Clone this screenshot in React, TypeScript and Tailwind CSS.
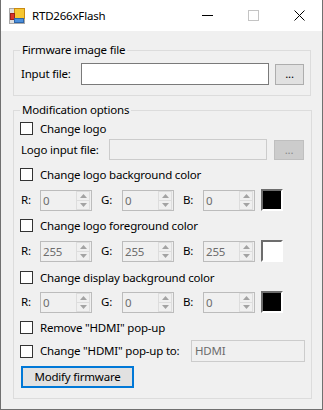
import React from "react";

const font = "font-['Noto_Sans',sans-serif]";

function Check({ label, className = "" }: { label: string; className?: string }) {
  return (
    <div className={`flex h-[13px] items-center ${className}`}>
      <span className="h-[13px] w-[13px] shrink-0 border border-[#333333] bg-white" />
      <span className="ml-[7px] leading-none">{label}</span>
    </div>
  );
}

function Arrow({ up }: { up?: boolean }) {
  return (
    <svg width="7" height="4" viewBox="0 0 7 4">
      <path d={up ? "M0 4 L3.5 0 L7 4 Z" : "M0 0 L3.5 4 L7 0 Z"} fill="#a3a3a3" />
    </svg>
  );
}

function Spin({ value }: { value: string }) {
  return (
    <div className="flex h-[21px] w-[52px] shrink-0 items-stretch border border-[#bcbcbc] bg-[#f0f0f0]">
      <span className="flex-1 pl-[2px] leading-[19px] text-[#6d6d6d]">{value}</span>
      <div className="mr-[1px] flex w-[14px] flex-col">
        <div className="flex flex-1 items-center justify-center border border-[#dddddd]">
          <Arrow up />
        </div>
        <div className="flex flex-1 items-center justify-center border border-t-0 border-[#dddddd]">
          <Arrow />
        </div>
      </div>
    </div>
  );
}

function RgbRow({ value, color, className = "" }: { value: string; color: string; className?: string }) {
  return (
    <div className={`flex h-[22px] items-center ${className}`}>
      <span className="w-[20px] pl-[1px]">R:</span>
      <Spin value={value} />
      <span className="ml-[8px] w-[22px] pl-[1px]">G:</span>
      <Spin value={value} />
      <span className="ml-[8px] w-[21px] pl-[1px]">B:</span>
      <Spin value={value} />
      <span
        className={`ml-[6px] h-[22px] w-[22px] border-2 border-t-[#6d6d6d] border-l-[#6d6d6d] border-r-white border-b-white ${color}`}
      />
    </div>
  );
}

function AppIcon() {
  return (
    <svg width="16" height="16" viewBox="0 0 16 16">
      <rect x="0.5" y="0.5" width="15" height="15" fill="#dedede" stroke="#a8a8a8" />
      <rect x="5.5" y="0.5" width="10" height="10" fill="#f6c632" stroke="#c98a12" />
      <rect x="1.5" y="5.5" width="4" height="6" fill="#d8342b" stroke="#9c1f18" />
      <rect x="5.5" y="10.5" width="9" height="4" fill="#4b8fdb" stroke="#2c64a8" />
    </svg>
  );
}

export default function App() {
  return (
    <div
      className={`flex h-[410px] w-[323px] flex-col border-x border-b border-[#707070] bg-[#f0f0f0] text-[11.5px] tracking-[-0.2px] text-black ${font}`}
    >
      {/* title bar */}
      <div className="flex h-[31px] shrink-0 items-center bg-white">
        <div className="ml-[8px] flex items-center">
          <AppIcon />
        </div>
        <span className="ml-[7px] leading-none">RTD266xFlash</span>
        <div className="ml-auto flex h-full">
          <div className="flex w-[46px] items-center justify-center">
            <svg width="11" height="11" viewBox="0 0 11 11">
              <path d="M0 5.5 H11" stroke="#000" strokeWidth="1" />
            </svg>
          </div>
          <div className="flex w-[46px] items-center justify-center">
            <svg width="11" height="11" viewBox="0 0 11 11">
              <rect x="0.5" y="0.5" width="10" height="10" fill="none" stroke="#c4c4c4" />
            </svg>
          </div>
          <div className="flex w-[46px] items-center justify-center">
            <svg width="11" height="11" viewBox="0 0 11 11">
              <path d="M0.5 0.5 L10.5 10.5 M10.5 0.5 L0.5 10.5" stroke="#000" strokeWidth="1" />
            </svg>
          </div>
        </div>
      </div>

      {/* firmware image file */}
      <fieldset className="mt-[11px] ml-[12px] mr-[11px] border border-[#dcdcdc] px-[6px] pb-[10px]">
        <legend className="px-[2px] leading-[16px]">Firmware image file</legend>
        <div className="mt-[5px] flex h-[22px] items-center">
          <span className="w-[61px] pl-[1px]">Input file:</span>
          <div className="h-[22px] w-[188px] border border-[#7a7a7a] bg-white" />
          <button className="ml-[6px] h-[21px] w-[29px] border border-[#adadad] bg-[#e1e1e1] leading-none">
            ...
          </button>
        </div>
      </fieldset>

      {/* modification options */}
      <fieldset className="mt-[6px] ml-[12px] mr-[11px] flex flex-col border border-[#dcdcdc] px-[6px] pb-[10px]">
        <legend className="px-[2px] leading-[16px]">Modification options</legend>
        <Check label="Change logo" className="mt-[4px]" />
        <div className="mt-[4px] flex h-[21px] items-center">
          <span className="w-[89px] pl-[1px]">Logo input file:</span>
          <div className="h-[21px] w-[158px] border border-[#cccccc] bg-[#f0f0f0]" />
          <button className="ml-[7px] h-[20px] w-[30px] border border-[#bfbfbf] bg-[#cccccc] leading-none text-[#8a8a8a]">
            ...
          </button>
        </div>
        <Check label="Change logo background color" className="mt-[8px]" />
        <RgbRow value="0" color="bg-black" className="mt-[8px]" />
        <Check label="Change logo foreground color" className="mt-[8px]" />
        <RgbRow value="255" color="bg-white" className="mt-[8px]" />
        <Check label="Change display background color" className="mt-[9px]" />
        <RgbRow value="0" color="bg-black" className="mt-[7px]" />
        <Check label={'Remove "HDMI" pop-up'} className="mt-[8px]" />
        <div className="mt-[6px] flex h-[22px] items-center">
          <span className="h-[13px] w-[13px] shrink-0 border border-[#333333] bg-white" />
          <span className="ml-[7px] w-[151px] leading-none">Change "HDMI" pop-up to:</span>
          <div className="h-[22px] w-[114px] border border-[#cccccc] bg-[#f0f0f0] pl-[3px] leading-[20px] text-[#6d6d6d]">
            HDMI
          </div>
        </div>
        <div className="mt-[4px] flex">
          <button className="ml-[1px] h-[22px] w-[113px] border-2 border-[#0078d7] bg-[#e1e1e1] leading-none">
            Modify firmware
          </button>
        </div>
      </fieldset>
    </div>
  );
}
